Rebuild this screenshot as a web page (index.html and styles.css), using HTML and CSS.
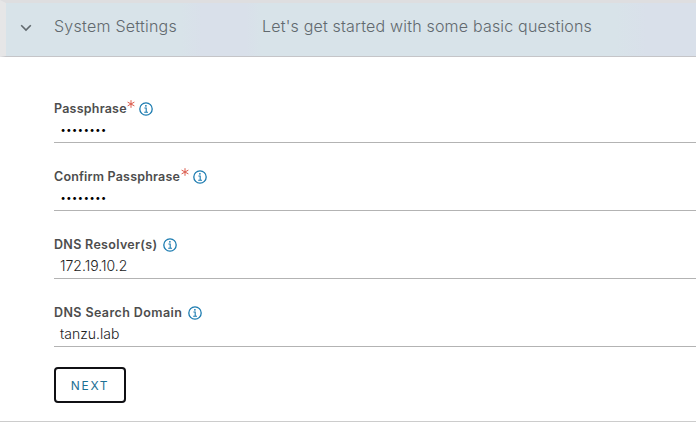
FILE: index.html
```html
<!DOCTYPE html>
<html lang="en">
<head>
<meta charset="utf-8">
<title>System Settings</title>
<link rel="stylesheet" href="styles.css">
</head>
<body>
<svg class="defs" width="0" height="0"><symbol id="info" viewBox="0 0 14 14"><circle cx="7" cy="7" r="6.2" fill="none" stroke="currentColor" stroke-width="1.3"/><circle cx="6.9" cy="3.8" r=".9" fill="currentColor"/><path d="M5.4 6h1.8v4.1M5.2 10.2h3.8" fill="none" stroke="currentColor" stroke-width="1.1"/></symbol>
<symbol id="required" viewBox="0 0 8 8"><path d="M4 .2v7.6M.6 2.1l6.8 3.8M.6 5.9l6.8-3.8" fill="none" stroke="currentColor" stroke-width="1"/></symbol></svg>
<main class="panel">
  <header class="header">
    <svg class="chevron" viewBox="0 0 12 8"><path d="M1.2 1.3 6 6.1l4.8-4.8" fill="none" stroke="currentColor" stroke-width="1.6"/></svg>
    <h1 class="title">System Settings</h1>
    <p class="description">Let's get started with some basic questions</p>
  </header>
  <form class="form">
    <div class="field">
      <div class="label-row"><label class="l-pass">Passphrase</label><svg class="required"><use href="#required"/></svg><svg class="info"><use href="#info"/></svg></div>
      <div class="value password">••••••••</div>
    </div>
    <div class="field">
      <div class="label-row"><label class="l-confirm">Confirm Passphrase</label><svg class="required"><use href="#required"/></svg><svg class="info"><use href="#info"/></svg></div>
      <div class="value password">••••••••</div>
    </div>
    <div class="field">
      <div class="label-row"><label class="l-dns">DNS Resolver(s)</label><svg class="info"><use href="#info"/></svg></div>
      <div class="value">172.19.10.2</div>
    </div>
    <div class="field">
      <div class="label-row"><label class="l-search">DNS Search Domain</label><svg class="info"><use href="#info"/></svg></div>
      <div class="value">tanzu.lab</div>
    </div>
    <button class="next" type="button">NEXT</button>
  </form>
</main>
</body>
</html>
```
FILE: styles.css
```css
* { box-sizing: border-box; }
body { margin: 0; background: #fff; font-family: Inter, sans-serif; overflow: hidden; }
.defs { display: none; }
.panel { height: 422px; border-bottom: 1px solid #ccc; }
.header {
  display: flex;
  align-items: center;
  height: 57px;
  padding: 0 0 8px 14px;
  border-top: 3px solid #dedee0;
  border-left: 6px solid #e6e6e7;
  border-bottom: 1px solid #c5c5c8;
  background: linear-gradient(90deg, #d8e3e9 175px, #d9e0ea 195px, #d9e0ea 240px, #d8e3e9 255px, #d8e3e9 610px, #d9e0ea 640px);
  color: #61696e;
}
.chevron { width: 12px; height: 8px; flex: none; margin-top: 5px; }
.title, .description { margin: 0; font-size: 16px; font-weight: 300; line-height: 24px; white-space: nowrap; }
.title { width: 208px; margin-left: 22px; flex: none; letter-spacing: .25px; }
.description { letter-spacing: .19px; }
.form { padding: 41px 0 0 54px; }
.field { display: flex; flex-direction: column; height: 68px; }
.label-row { display: flex; height: 21px; align-items: center; }
label { font-size: 12.5px; font-weight: 600; color: #4d4d4d; line-height: 20px; white-space: nowrap; }
.l-pass { width: 72px; letter-spacing: .22px; }
.l-confirm { width: 126px; letter-spacing: .18px; }
.l-dns { width: 103px; letter-spacing: .32px; }
.l-search { width: 128px; letter-spacing: .4px; }
.required { width: 8px; height: 8px; margin: -9px 0 0 1px; color: #db5a4b; flex: none; }
.info { width: 14px; height: 14px; margin: 1px 0 0 6px; color: #1b7bb0; flex: none; }
.required + .info { margin-left: 4px; }
.value { height: 24px; padding-left: 6px; border-bottom: 1px solid #b3b3b3; font-size: 14px; font-weight: 300; line-height: 22px; color: #222; }
.password { color: #000; font-size: 11px; line-height: 23px; letter-spacing: -.4px; }
.next { display: block; width: 72px; height: 36px; margin: -3px 0 0; padding: 2px 0 0; border: 2px solid #101014; border-radius: 4px; background: #fff; color: #1c7094; font: 400 12px/1 Inter, sans-serif; letter-spacing: 1.7px; }
```
